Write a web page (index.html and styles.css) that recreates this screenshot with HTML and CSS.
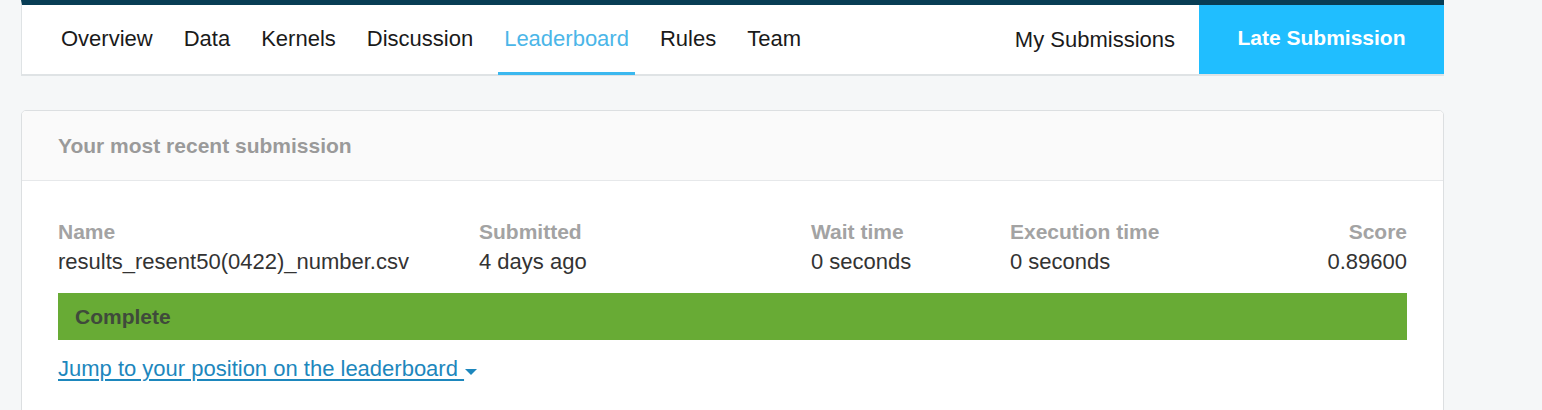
FILE: index.html
```html
<!DOCTYPE html>
<html>
<head>
<meta charset="utf-8">
<link rel="stylesheet" href="styles.css">
</head>
<body>
<div class="page">
  <nav class="nav">
    <ul class="tabs">
      <li class="tab">Overview</li>
      <li class="tab">Data</li>
      <li class="tab">Kernels</li>
      <li class="tab">Discussion</li>
      <li class="tab active">Leaderboard</li>
      <li class="tab">Rules</li>
      <li class="tab">Team</li>
    </ul>
    <div class="nav-right">
      <span class="my-subs">My Submissions</span>
      <span class="late-btn">Late Submission</span>
    </div>
  </nav>

  <section class="card">
    <header class="card-head">Your most recent submission</header>
    <div class="card-body">
      <div class="grid">
        <div class="label">Name</div>
        <div class="label">Submitted</div>
        <div class="label">Wait time</div>
        <div class="label">Execution time</div>
        <div class="label right">Score</div>
        <div class="value">results_resent50(0422)_number.csv</div>
        <div class="value">4 days ago</div>
        <div class="value">0 seconds</div>
        <div class="value">0 seconds</div>
        <div class="value right">0.89600</div>
      </div>
      <div class="status">Complete</div>
      <a class="jump" href="#">Jump to your position on the leaderboard&nbsp;</a><span class="caret"></span>
    </div>
  </section>
</div>
</body>
</html>
```

FILE: styles.css
```css
html, body {
  margin: 0;
  padding: 0;
  background: #f5f7f8;
  font-family: "Liberation Sans", Arial, sans-serif;
  color: #222;
}

.page {
  width: 1423px;
  margin-left: 21px;
}

.nav {
  display: flex;
  justify-content: space-between;
  align-items: stretch;
  height: 69px;
  background: #fff;
  border-top: 5px solid #083d55;
  border-bottom: 2px solid #dfe3e5;
  border-left: 1px solid #dfe3e5;
  box-sizing: content-box;
}

.tabs {
  list-style: none;
  margin: 0;
  padding: 0 0 0 33px;
  display: flex;
  gap: 19px;
}

.tab {
  display: flex;
  align-items: center;
  padding: 0 6px;
  font-size: 22px;
  color: #1a1a1a;
  border-bottom: 3px solid transparent;
  margin-bottom: -1px;
  padding-top: 1px;
}

.tab.active {
  color: #4bb6e8;
  border-bottom-color: #3bb8ef;
}

.nav-right {
  display: flex;
  align-items: stretch;
}

.my-subs {
  display: flex;
  align-items: center;
  font-size: 22px;
  color: #1a1a1a;
  padding-right: 24px;
}

.late-btn {
  display: flex;
  align-items: center;
  justify-content: center;
  width: 245px;
  padding-bottom: 3px;
  box-sizing: border-box;
  background: #20beff;
  color: #fff;
  font-weight: bold;
  font-size: 21px;
}

.card {
  margin-top: 34px;
  background: #fff;
  border: 1px solid #dcdfe1;
  border-radius: 5px;
  overflow: hidden;
}

.card-head {
  height: 69px;
  display: flex;
  align-items: center;
  padding-left: 36px;
  background: #fafafa;
  border-bottom: 1px solid #e6e8ea;
  font-size: 21px;
  font-weight: bold;
  color: #9a9a9a;
}

.card-body {
  padding: 36px 36px 60px 36px;
}

.grid {
  display: grid;
  grid-template-columns: 421px 332px 199px 1fr auto;
  row-gap: 0;
}

.label {
  font-size: 21px;
  font-weight: bold;
  color: #a3a3a3;
  line-height: 30px;
}

.value {
  font-size: 22px;
  color: #333;
  line-height: 30px;
}

.right {
  text-align: right;
}

.status {
  margin-top: 16px;
  height: 47px;
  margin-bottom: 14px;
  background: #68ab35;
  display: flex;
  align-items: center;
  padding-left: 17px;
  font-size: 21px;
  font-weight: bold;
  color: #3f4a3b;
}

.jump {
  font-size: 22px;
  line-height: 30px;
  color: #1d87bd;
  text-decoration: underline;
  text-underline-offset: 3px;
}

.caret {
  display: inline-block;
  width: 0;
  height: 0;
  margin-left: 1px;
  vertical-align: middle;
  border-left: 6px solid transparent;
  border-right: 6px solid transparent;
  border-top: 6px solid #1d87bd;
}
```
